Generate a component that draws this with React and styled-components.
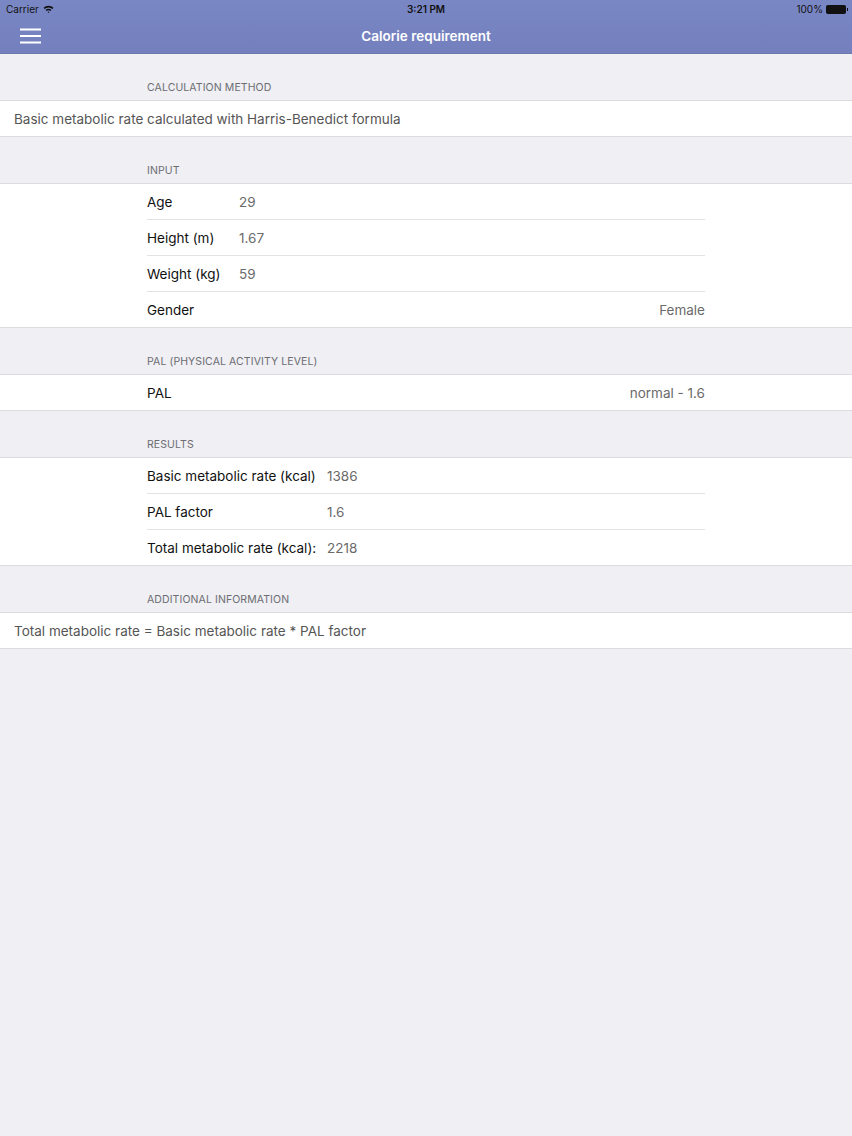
import React from "react";
import styled, { createGlobalStyle } from "styled-components";

const Global = createGlobalStyle`
  html, body { margin: 0; padding: 0; background: #efeff4; }
  body { font-family: Inter, "Noto Sans", sans-serif; -webkit-font-smoothing: antialiased; }
  #root { min-height: 1136px; }
`;

const Page = styled.div`
  width: 852px;
  min-height: 1136px;
  background: #efeff4;
`;

const Header = styled.header`
  background: linear-gradient(#7a87c5, #7380bd);
  border-bottom: 1px solid #6d78b0;
  height: 54px;
  box-sizing: border-box;
  display: flex;
  flex-direction: column;
`;

const StatusBar = styled.div`
  height: 18px;
  display: grid;
  grid-template-columns: 1fr auto 1fr;
  align-items: center;
  padding: 0 6px;
  font-size: 10px;
  color: #111;
`;

const StatusLeft = styled.div`
  display: flex;
  align-items: center;
  gap: 4px;
`;

const StatusRight = styled.div`
  display: flex;
  align-items: center;
  justify-content: flex-end;
  gap: 3px;
`;

const Time = styled.div`
  font-weight: 600;
`;

const Battery = styled.div`
  width: 18px;
  height: 7px;
  background: #111;
  border: 1px solid #111;
  border-radius: 1.5px;
  position: relative;
  &::after {
    content: "";
    position: absolute;
    right: -3px;
    top: 2px;
    width: 1.5px;
    height: 3px;
    background: #111;
  }
`;

const NavBar = styled.div`
  flex: 1;
  display: grid;
  grid-template-columns: 60px 1fr 60px;
  align-items: center;
`;

const MenuButton = styled.button`
  border: 0;
  background: none;
  padding: 0 0 0 20px;
  height: 100%;
  display: flex;
  align-items: center;
  cursor: pointer;
`;

const Title = styled.h1`
  margin: 0;
  text-align: center;
  color: #fff;
  font-size: 13.5px;
  font-weight: 600;
`;

const SectionHeader = styled.div`
  padding: 27px 0 6px ${p => p.$indent}px;
  font-size: 10.5px;
  color: #6d6d72;
  text-transform: uppercase;
  letter-spacing: 0.1px;
  line-height: 13px;
`;

const Group = styled.div`
  background: #fff;
  border-top: 1px solid #dcdce0;
  border-bottom: 1px solid #dcdce0;
`;

const Row = styled.div`
  box-sizing: border-box;
  height: 35px;
  margin: 0 ${p => p.$right}px 0 ${p => p.$indent}px;
  display: flex;
  align-items: center;
  font-size: 13.5px;
  & + & {
    border-top: 1px solid #e3e3e6;
    height: 36px;
  }
`;

const Label = styled.span`
  color: #111;
  width: ${p => p.$width}px;
  flex-shrink: 0;
`;

const Value = styled.span`
  color: #6a6a6a;
  flex: 1;
  text-align: ${p => (p.$right ? "right" : "left")};
`;

const Plain = styled.span`
  color: #555;
`;

function Wifi() {
  return (
    <svg width="11" height="8" viewBox="0 0 11 8">
      <path d="M0.5 2.8 A7 7 0 0 1 10.5 2.8 L9.3 4 A5.3 5.3 0 0 0 1.7 4 Z" fill="#111" />
      <path d="M2.6 4.9 A4 4 0 0 1 8.4 4.9 L7.2 6.1 A2.3 2.3 0 0 0 3.8 6.1 Z" fill="#111" />
      <path d="M4.6 6.9 L5.5 7.9 L6.4 6.9 A1.3 1.3 0 0 0 4.6 6.9 Z" fill="#111" />
    </svg>
  );
}

function Burger() {
  return (
    <svg width="21" height="16" viewBox="0 0 21 16">
      <rect x="0" y="0.5" width="21" height="2" fill="#fff" />
      <rect x="0" y="7" width="21" height="2" fill="#fff" />
      <rect x="0" y="13.5" width="21" height="2" fill="#fff" />
    </svg>
  );
}

export default function App() {
  return (
    <Page>
      <Global />
      <Header>
        <StatusBar>
          <StatusLeft>
            Carrier <Wifi />
          </StatusLeft>
          <Time>3:21 PM</Time>
          <StatusRight>
            100% <Battery />
          </StatusRight>
        </StatusBar>
        <NavBar>
          <MenuButton aria-label="Menu">
            <Burger />
          </MenuButton>
          <Title>Calorie requirement</Title>
          <div />
        </NavBar>
      </Header>

      <SectionHeader $indent={147}>Calculation method</SectionHeader>
      <Group>
        <Row $indent={14} $right={14}>
          <Plain>Basic metabolic rate calculated with Harris-Benedict formula</Plain>
        </Row>
      </Group>

      <SectionHeader $indent={147}>Input</SectionHeader>
      <Group>
        <Row $indent={147} $right={147}>
          <Label $width={92}>Age</Label>
          <Value>29</Value>
        </Row>
        <Row $indent={147} $right={147}>
          <Label $width={92}>Height (m)</Label>
          <Value>1.67</Value>
        </Row>
        <Row $indent={147} $right={147}>
          <Label $width={92}>Weight (kg)</Label>
          <Value>59</Value>
        </Row>
        <Row $indent={147} $right={147}>
          <Label $width={92}>Gender</Label>
          <Value $right>Female</Value>
        </Row>
      </Group>

      <SectionHeader $indent={147}>PAL (Physical activity level)</SectionHeader>
      <Group>
        <Row $indent={147} $right={147}>
          <Label $width={92}>PAL</Label>
          <Value $right>normal - 1.6</Value>
        </Row>
      </Group>

      <SectionHeader $indent={147}>Results</SectionHeader>
      <Group>
        <Row $indent={147} $right={147}>
          <Label $width={180}>Basic metabolic rate (kcal)</Label>
          <Value>1386</Value>
        </Row>
        <Row $indent={147} $right={147}>
          <Label $width={180}>PAL factor</Label>
          <Value>1.6</Value>
        </Row>
        <Row $indent={147} $right={147}>
          <Label $width={180}>Total metabolic rate (kcal):</Label>
          <Value>2218</Value>
        </Row>
      </Group>

      <SectionHeader $indent={147}>Additional information</SectionHeader>
      <Group>
        <Row $indent={14} $right={14}>
          <Plain>Total metabolic rate = Basic metabolic rate * PAL factor</Plain>
        </Row>
      </Group>
    </Page>
  );
}
